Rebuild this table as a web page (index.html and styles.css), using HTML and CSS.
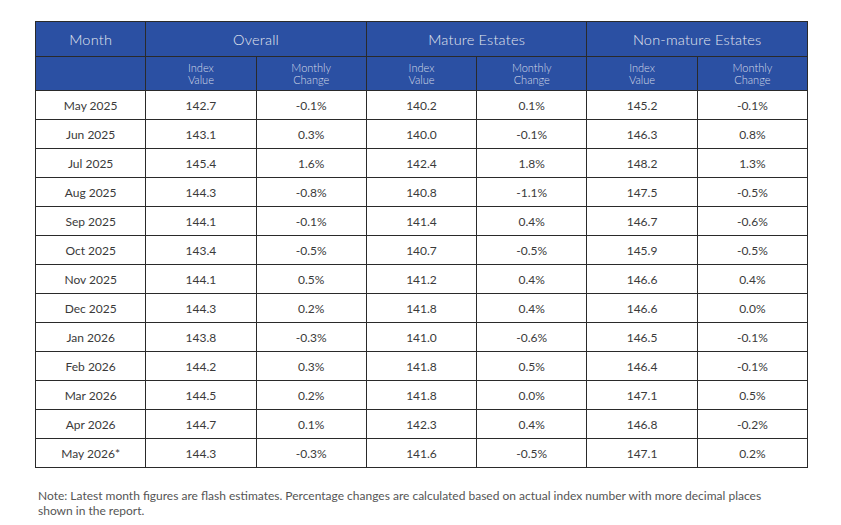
FILE: index.html
```html
<!DOCTYPE html>
<html>
<head>
<meta charset="utf-8">
<link rel="stylesheet" href="styles.css">
</head>
<body>
<div class="page">
<table class="rpi">
<colgroup>
<col><col><col><col><col><col><col>
</colgroup>
<thead>
<tr class="h1">
<th>Month</th>
<th colspan="2">Overall</th>
<th colspan="2">Mature Estates</th>
<th colspan="2">Non-mature Estates</th>
</tr>
<tr class="h2">
<th></th>
<th>Index<br>Value</th>
<th>Monthly<br>Change</th>
<th>Index<br>Value</th>
<th>Monthly<br>Change</th>
<th>Index<br>Value</th>
<th>Monthly<br>Change</th>
</tr>
</thead>
<tbody>
<tr><td>May 2025</td><td>142.7</td><td>-0.1%</td><td>140.2</td><td>0.1%</td><td>145.2</td><td>-0.1%</td></tr>
<tr><td>Jun 2025</td><td>143.1</td><td>0.3%</td><td>140.0</td><td>-0.1%</td><td>146.3</td><td>0.8%</td></tr>
<tr><td>Jul 2025</td><td>145.4</td><td>1.6%</td><td>142.4</td><td>1.8%</td><td>148.2</td><td>1.3%</td></tr>
<tr><td>Aug 2025</td><td>144.3</td><td>-0.8%</td><td>140.8</td><td>-1.1%</td><td>147.5</td><td>-0.5%</td></tr>
<tr><td>Sep 2025</td><td>144.1</td><td>-0.1%</td><td>141.4</td><td>0.4%</td><td>146.7</td><td>-0.6%</td></tr>
<tr><td>Oct 2025</td><td>143.4</td><td>-0.5%</td><td>140.7</td><td>-0.5%</td><td>145.9</td><td>-0.5%</td></tr>
<tr><td>Nov 2025</td><td>144.1</td><td>0.5%</td><td>141.2</td><td>0.4%</td><td>146.6</td><td>0.4%</td></tr>
<tr><td>Dec 2025</td><td>144.3</td><td>0.2%</td><td>141.8</td><td>0.4%</td><td>146.6</td><td>0.0%</td></tr>
<tr><td>Jan 2026</td><td>143.8</td><td>-0.3%</td><td>141.0</td><td>-0.6%</td><td>146.5</td><td>-0.1%</td></tr>
<tr><td>Feb 2026</td><td>144.2</td><td>0.3%</td><td>141.8</td><td>0.5%</td><td>146.4</td><td>-0.1%</td></tr>
<tr><td>Mar 2026</td><td>144.5</td><td>0.2%</td><td>141.8</td><td>0.0%</td><td>147.1</td><td>0.5%</td></tr>
<tr><td>Apr 2026</td><td>144.7</td><td>0.1%</td><td>142.3</td><td>0.4%</td><td>146.8</td><td>-0.2%</td></tr>
<tr><td>May 2026*</td><td>144.3</td><td>-0.3%</td><td>141.6</td><td>-0.5%</td><td>147.1</td><td>0.2%</td></tr>
</tbody>
</table>
<p class="note">Note: Latest month figures are flash estimates. Percentage changes are calculated based on actual index number with more decimal places shown in the report.</p>
</div>
</body>
</html>
```
FILE: styles.css
```css
html, body {
  margin: 0;
  padding: 0;
  background: #ffffff;
}
body {
  font-family: Lato, "Open Sans", "Liberation Sans", sans-serif;
  color: #3a3a3a;
}
.page {
  padding: 21px 33px 0 35px;
}
.rpi {
  width: 773px;
  border-collapse: collapse;
  table-layout: fixed;
  border: 1px solid #8a8a8a;
}
.rpi th,
.rpi td {
  border: 1px solid #2a2a2a;
  text-align: center;
  padding: 0;
}
.rpi thead th {
  background: #2b50a3;
  color: #e3e7f0;
  font-weight: 300;
}
.rpi .h1 th {
  height: 34px;
  font-size: 14.5px;
  letter-spacing: 0.2px;
}
.rpi .h2 th {
  height: 33px;
  font-size: 11px;
  line-height: 12px;
  color: #d5dbe8;
}
.rpi td {
  height: 28px;
  font-size: 12px;
  color: #3a3a3a;
}
.note {
  margin: 20px 0 0 3px;
  font-size: 12px;
  line-height: 15px;
  color: #555555;
  width: 760px;
}
```
